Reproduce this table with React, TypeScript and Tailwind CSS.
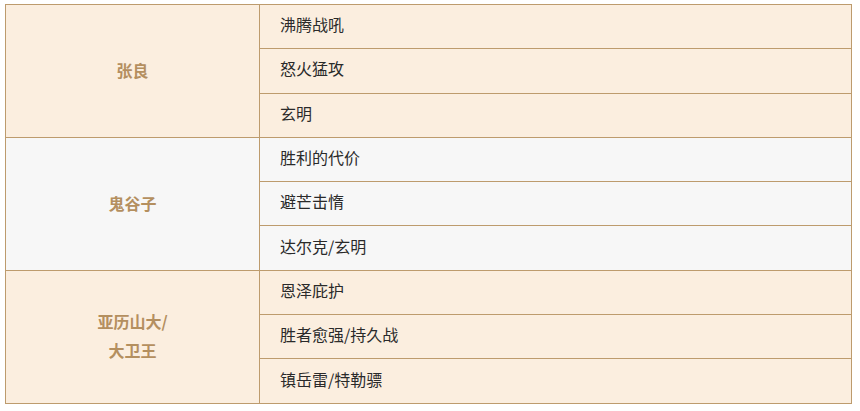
const groups = [
  { name: ["张良"], bg: "bg-[#fbeedf]", skills: ["沸腾战吼", "怒火猛攻", "玄明"] },
  { name: ["鬼谷子"], bg: "bg-[#f7f7f7]", skills: ["胜利的代价", "避芒击惰", "达尔克/玄明"] },
  { name: ["亚历山大/", "大卫王"], bg: "bg-[#fbeedf]", skills: ["恩泽庇护", "胜者愈强/持久战", "镇岳雷/特勒骠"] },
];

export default function App() {
  return (
    <div
      className="bg-white w-[860px] h-[411px] pt-[4px] pl-[5px]"
      style={{ fontFamily: '"Noto Sans CJK SC", "Noto Sans", sans-serif' }}
    >
      <table className="w-[847px] border-collapse border-[1.5px] border-[#bd9b6d] text-[16px]">
        <tbody>
          {groups.map((g) =>
            g.skills.map((s, i) => (
              <tr key={s} className={`${g.bg} h-[44.3px]`}>
                {i === 0 && (
                  <td
                    rowSpan={3}
                    className="w-[254px] border border-[#bd9b6d] pb-[1px] text-center font-bold text-[#b48f5f] leading-[29px]"
                  >
                    {g.name.map((n) => (
                      <div key={n}>{n}</div>
                    ))}
                  </td>
                )}
                <td className="border border-[#bd9b6d] pl-[20px] pb-[5px] text-[#2a2a2a] align-middle">{s}</td>
              </tr>
            ))
          )}
        </tbody>
      </table>
    </div>
  );
}
